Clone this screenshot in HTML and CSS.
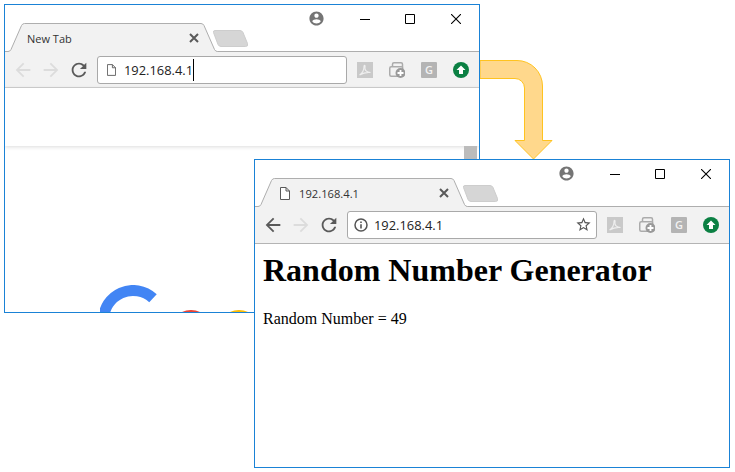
FILE: index.html
```html
<!DOCTYPE html>
<html lang="en">
<head>
    <meta charset="UTF-8">
    <title>Random Number Generator</title>
    <link rel="stylesheet" href="styles.css">
</head>
<body>
    <svg class="sprite" xmlns="http://www.w3.org/2000/svg">
        <symbol id="tab-shape" viewBox="0 0 245 47">
            <path d="M0 46.5H3Q5 46.5 6 44.5L16.5 20.5Q17.5 18.5 19.5 18.5H196Q198 18.5 199 20.5L209.5 44.5Q210.5 46.5 212.5 46.5V47H0Z" fill="#f2f2f2"/>
            <path d="M0 46.5H3Q5 46.5 6 44.5L16.5 20.5Q17.5 18.5 19.5 18.5H196Q198 18.5 199 20.5L209.5 44.5Q210.5 46.5 212.5 46.5" fill="none" stroke="#aeaeae"/>
            <path d="M210 25.500H235Q237 25.500 238 27.500L242.500 38.500Q243.500 41.500 240.500 41.500H216Q214 41.500 213 39.500L208.500 27.500Q208 25.500 210 25.500Z" fill="#d6d6d6" stroke="#cdcdcd"/>
        </symbol>
        <symbol id="i-back" viewBox="0 0 24 24"><path d="M20 11H7.830l5.590-5.590L12 4l-8 8 8 8 1.410-1.410L7.830 13H20v-2z"/></symbol>
        <symbol id="i-forward" viewBox="0 0 24 24"><path d="M4 11h12.170l-5.590-5.590L12 4l8 8-8 8-1.410-1.410L16.170 13H4v-2z"/></symbol>
        <symbol id="i-reload" viewBox="0 0 24 24"><path d="M17.650 6.350C16.200 4.900 14.210 4 12 4c-4.420 0-7.990 3.580-7.990 8s3.570 8 7.990 8c3.730 0 6.840-2.550 7.730-6h-2.080c-.82 2.330-3.040 4-5.650 4-3.310 0-6-2.690-6-6s2.690-6 6-6c1.660 0 3.140.69 4.220 1.780L13 11h7V4l-2.350 2.350z"/></symbol>
        <symbol id="i-page" viewBox="0 0 10 13"><path d="M.5.5H6L9.500 4V12.500H.5ZM6 .5V4H9.500" fill="#fff" stroke="#5a5a5a"/></symbol>
        <symbol id="i-info" viewBox="0 0 14 14"><circle cx="7" cy="7" r="6" fill="none" stroke="#555" stroke-width="1.500"/><path d="M6.200 3.400h1.600V5H6.200zM6.200 6.200h1.600v4.400H6.200z" fill="#555"/></symbol>
        <symbol id="i-star" viewBox="0 0 24 24"><path d="M22 9.240l-7.190-.62L12 2 9.190 8.630 2 9.240l5.460 4.730L5.820 21 12 17.270 18.180 21l-1.630-7.030L22 9.240zM12 15.400l-3.760 2.270 1-4.280-3.320-2.880 4.380-.38L12 6.100l1.710 4.040 4.380.38-3.320 2.880 1 4.280L12 15.400z"/></symbol>
        <symbol id="i-profile" viewBox="0 0 24 24"><path d="M12 2C6.480 2 2 6.480 2 12s4.480 10 10 10 10-4.480 10-10S17.520 2 12 2zm0 3c1.660 0 3 1.340 3 3s-1.340 3-3 3-3-1.340-3-3 1.340-3 3-3zm0 14.200c-2.500 0-4.710-1.280-6-3.220.03-1.990 4-3.080 6-3.080 1.990 0 5.970 1.090 6 3.080-1.290 1.940-3.500 3.220-6 3.220z"/></symbol>
        <symbol id="i-min" viewBox="0 0 10 10"><path d="M0 5.500H10" stroke="#000"/></symbol>
        <symbol id="i-max" viewBox="0 0 10 10"><path d="M.5.5H9.500V9.500H.5Z" fill="none" stroke="#000"/></symbol>
        <symbol id="i-close" viewBox="0 0 10 10"><path d="M0 0L10 10M10 0L0 10" stroke="#000" stroke-width="1.100"/></symbol>
        <symbol id="i-tabclose" viewBox="0 0 10 10"><path d="M1 1L9 9M9 1L1 9" stroke="#5a5a5a" stroke-width="2"/></symbol>
        <symbol id="i-pdf" viewBox="0 0 16 16"><rect width="16" height="16" fill="#c9c9c9"/><path d="M2.500 13C5 11.500 7 8 7 4.500 7 2.500 8.500 3 8 5.500 7.500 8 9.500 10.500 13.500 10.500 10 10 6 11 2.500 13Z" fill="none" stroke="#efefef" stroke-width="1.100"/></symbol>
        <symbol id="i-print" viewBox="0 0 16 16"><rect x="3.500" y=".75" width="10" height="6" rx="1.500" fill="#f2f2f2" stroke="#ababab" stroke-width="1.500"/><rect x=".75" y="4.750" width="13" height="9.500" rx="1.500" fill="#f2f2f2" stroke="#ababab" stroke-width="1.500"/><circle cx="11.500" cy="11" r="5" fill="#999"/><path d="M11.500 8v6M8.500 11h6" stroke="#fff" stroke-width="1.800"/></symbol>
        <symbol id="i-update" viewBox="0 0 16 16"><circle cx="8" cy="8" r="8" fill="#0b8043"/><path d="M8 3.500L12.500 8H10V12H6V8H3.500Z" fill="#fff"/></symbol>
    </svg>

    <div class="window window-back">
        <div class="titlebar">
            <div class="tab">
                <svg class="tab-shape"><use href="#tab-shape"/></svg>
                <span class="tab-title">New Tab</span>
                <svg class="tab-close"><use href="#i-tabclose"/></svg>
            </div>
            <svg class="profile"><use href="#i-profile"/></svg>
            <div class="caption caption-min"><svg><use href="#i-min"/></svg></div>
            <div class="caption"><svg><use href="#i-max"/></svg></div>
            <div class="caption"><svg><use href="#i-close"/></svg></div>
        </div>
        <div class="toolbar">
            <div class="nav off"><svg><use href="#i-back"/></svg></div>
            <div class="nav off"><svg><use href="#i-forward"/></svg></div>
            <div class="nav"><svg><use href="#i-reload"/></svg></div>
            <div class="omnibox">
                <div class="site-icon"><svg class="page-small"><use href="#i-page"/></svg></div>
                <span class="url typing">192.168.4.1</span>
            </div>
            <div class="ext"><svg><use href="#i-pdf"/></svg></div>
            <div class="ext"><svg><use href="#i-print"/></svg></div>
            <div class="ext"><span class="ext-g">G</span></div>
            <div class="ext"><svg><use href="#i-update"/></svg></div>
        </div>
        <div class="newtab-top"></div>
        <div class="newtab">
            <div class="scroll-thumb"></div>
            <svg class="logo" width="160" height="40" viewBox="0 0 160 40">
                <path d="M53 13.300A29.500 29.500 0 0 0 3.500 35" fill="none" stroke="#4285f4" stroke-width="11"/>
                <circle cx="91" cy="45.500" r="15" fill="none" stroke="#ea4335" stroke-width="11"/>
                <circle cx="139" cy="45.500" r="15" fill="none" stroke="#fbbc05" stroke-width="11"/>
            </svg>
        </div>
    </div>

    <svg class="flow-arrow" width="80" height="104" viewBox="480 58 80 104">
        <path d="M480 60.500H517A25.500 25.500 0 0 1 542.500 86V140.500H552L533.500 159L515 140.500H524.500V88A9.500 9.500 0 0 0 515 78.500H480Z" fill="#ffd88c" stroke="#ffc31f"/>
    </svg>

    <div class="window window-front">
        <div class="titlebar">
            <div class="tab">
                <svg class="tab-shape"><use href="#tab-shape"/></svg>
                <svg class="page-tab"><use href="#i-page"/></svg>
                <span class="tab-title tab-title-url">192.168.4.1</span>
                <svg class="tab-close"><use href="#i-tabclose"/></svg>
            </div>
            <svg class="profile"><use href="#i-profile"/></svg>
            <div class="caption caption-min"><svg><use href="#i-min"/></svg></div>
            <div class="caption"><svg><use href="#i-max"/></svg></div>
            <div class="caption"><svg><use href="#i-close"/></svg></div>
        </div>
        <div class="toolbar toolbar-dark">
            <div class="nav"><svg><use href="#i-back"/></svg></div>
            <div class="nav off"><svg><use href="#i-forward"/></svg></div>
            <div class="nav"><svg><use href="#i-reload"/></svg></div>
            <div class="omnibox">
                <div class="site-icon"><svg class="info"><use href="#i-info"/></svg></div>
                <span class="url">192.168.4.1</span>
                <svg class="star"><use href="#i-star"/></svg>
            </div>
            <div class="ext"><svg><use href="#i-pdf"/></svg></div>
            <div class="ext"><svg><use href="#i-print"/></svg></div>
            <div class="ext"><span class="ext-g">G</span></div>
            <div class="ext"><svg><use href="#i-update"/></svg></div>
        </div>
        <div class="page">
            <h1>Random Number Generator</h1>
            <p>Random Number = 49</p>
        </div>
    </div>
</body>
</html>
```

FILE: styles.css
```css
body {
    margin: 0;
    width: 735px;
    height: 472px;
    position: relative;
    overflow: hidden;
    background: #fff;
    font-family: "Open Sans", sans-serif;
}
.sprite {
    position: absolute;
    width: 0;
    height: 0;
}
.window {
    position: absolute;
    width: 476px;
    height: 309px;
    box-sizing: border-box;
    border: 1px solid #1a82d6;
    background: #fff;
    display: flex;
    flex-direction: column;
    overflow: hidden;
}
.window-back {
    left: 4px;
    top: 4px;
}
.window-front {
    left: 254px;
    top: 159px;
}
.flow-arrow {
    position: absolute;
    left: 480px;
    top: 58px;
}
.titlebar {
    height: 46px;
    flex: none;
    display: flex;
    align-items: flex-start;
    border-bottom: 1px solid #aeaeae;
}
.tab {
    position: relative;
    width: 245px;
    height: 47px;
    box-sizing: border-box;
    padding: 19px 51px 0 22px;
    display: flex;
    align-items: center;
    font-size: 11px;
    color: #333;
}
.tab-shape {
    position: absolute;
    left: 0;
    top: 0;
    width: 245px;
    height: 47px;
}
.tab-title {
    position: relative;
    flex: 1;
}
.tab-title-url {
    font-size: 11.2px;
}
.tab-close {
    position: relative;
    width: 10px;
    height: 10px;
}
.page-tab {
    position: relative;
    width: 10px;
    height: 13px;
    margin: 0 9px 0 3px;
}
.profile {
    width: 17px;
    height: 17px;
    margin: 5px 18px 0 auto;
    fill: #757575;
    flex: none;
}
.caption {
    width: 46px;
    height: 28px;
    flex: none;
    display: flex;
    align-items: center;
    justify-content: center;
}
.caption-min {
    width: 44px;
}
.caption svg {
    width: 10px;
    height: 10px;
}
.toolbar {
    height: 35px;
    flex: none;
    box-sizing: content-box;
    display: flex;
    align-items: center;
    padding-left: 4px;
    background: #f2f2f2;
    border-bottom: 1px solid #d0d0d0;
}
.toolbar-dark {
    padding-bottom: 1px;
    border-bottom-color: #b4b4b4;
}
.nav {
    width: 28px;
    height: 28px;
    flex: none;
    display: flex;
    align-items: center;
    justify-content: center;
    fill: #5a5a5a;
}
.nav svg {
    width: 22px;
    height: 22px;
}
.nav.off {
    fill: #dcdcdc;
}
.omnibox {
    width: 250px;
    height: 28px;
    box-sizing: border-box;
    margin: 0 2px 0 4px;
    flex: none;
    display: flex;
    align-items: center;
    border: 1px solid #a9a9a9;
    border-radius: 3px;
    background: #fff;
}
.site-icon {
    width: 26px;
    flex: none;
    display: flex;
    justify-content: center;
}
.page-small {
    width: 9px;
    height: 12px;
}
.info {
    width: 14px;
    height: 14px;
}
.star {
    width: 17px;
    height: 17px;
    margin: 0 4px 0 auto;
    fill: #555;
}
.url {
    font-size: 12.9px;
    color: #222;
}
.typing {
    border-right: 1px solid #000;
    padding: 2px 0;
}
.ext {
    width: 32px;
    flex: none;
    display: flex;
    justify-content: center;
}
.ext svg {
    width: 16px;
    height: 16px;
}
.ext-g {
    width: 16px;
    height: 16px;
    border-radius: 1px;
    background: #b4b4b4;
    color: #f2f2f2;
    font-size: 11px;
    font-weight: 600;
    line-height: 16px;
    text-align: center;
}
.newtab-top {
    height: 58px;
    flex: none;
    position: relative;
    box-shadow: 0 1px 4px rgba(0, 0, 0, 0.14);
}
.newtab {
    flex: 1;
}
.scroll-thumb {
    position: absolute;
    right: 2px;
    top: 141px;
    width: 13px;
    height: 40px;
    background: #bcbcbc;
}
.logo {
    display: block;
    margin: 139px 0 0 95px;
}
.page {
    flex: 1;
    padding: 8px;
    color: #000;
    font-family: "Liberation Serif", serif;
}
h1 {
    margin: 0 0 21px;
    font-size: 32px;
    line-height: 37px;
}
p {
    margin: 0;
    font-size: 16px;
    line-height: 18px;
}
```
